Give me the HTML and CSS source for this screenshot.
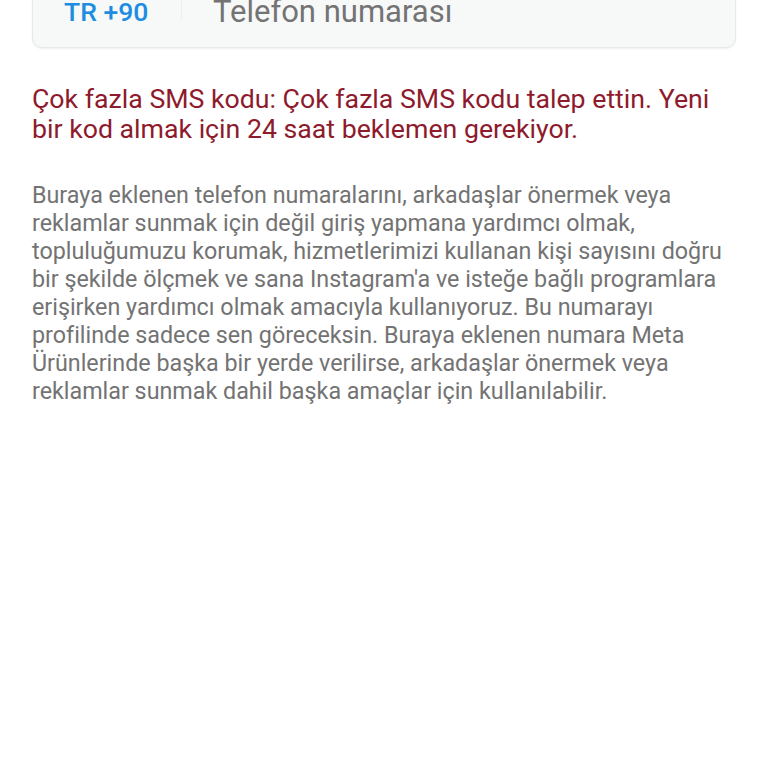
FILE: index.html
```html
<!DOCTYPE html>
<html lang="tr">
<head>
    <meta charset="UTF-8">
    <meta name="viewport" content="width=device-width, initial-scale=1.0">
    <title>Telefon numarası</title>
    <link rel="stylesheet" href="styles.css">
</head>
<body>
    <div class="phone-field">
        <span class="country">TR +90</span>
        <span class="divider"></span>
        <span class="placeholder">Telefon numarası</span>
    </div>

    <p class="error">Çok fazla SMS kodu: Çok fazla SMS kodu talep ettin. Yeni bir kod almak için 24 saat beklemen gerekiyor.</p>

    <p class="note">Buraya eklenen telefon numaralarını, arkadaşlar önermek veya reklamlar sunmak için değil giriş yapmana yardımcı olmak, topluluğumuzu korumak, hizmetlerimizi kullanan kişi sayısını doğru bir şekilde ölçmek ve sana Instagram'a ve isteğe bağlı programlara erişirken yardımcı olmak amacıyla kullanıyoruz. Bu numarayı profilinde sadece sen göreceksin. Buraya eklenen numara Meta Ürünlerinde başka bir yerde verilirse, arkadaşlar önermek veya reklamlar sunmak dahil başka amaçlar için kullanılabilir.</p>
</body>
</html>
```

FILE: styles.css
```css
body {
    margin: 0;
    padding: 0 32px;
    background: #fff;
    font-family: Roboto, "Noto Sans", sans-serif;
}
.phone-field {
    display: flex;
    align-items: center;
    height: 80px;
    margin-top: -34px;
    background: #f7f8f8;
    border: 1px solid #e6e8ea;
    border-radius: 10px;
    box-shadow: 0 1px 2px rgba(0, 0, 0, 0.06);
}
.country {
    padding: 8px 0 0 31px;
    width: 117px;
    color: #1c8de0;
    font-size: 26.5px;
    font-weight: 500;
}
.divider {
    width: 1px;
    height: 26px;
    background: #eceeef;
}
.placeholder {
    padding: 8px 0 0 31px;
    color: #737373;
    font-size: 31px;
}
.error {
    margin: 36px 0 0;
    color: #8e1b2d;
    font-size: 26.7px;
    line-height: 30px;
}
.note {
    margin: 37px 0 0;
    color: #737373;
    font-size: 23.3px;
    line-height: 28px;
}
```
